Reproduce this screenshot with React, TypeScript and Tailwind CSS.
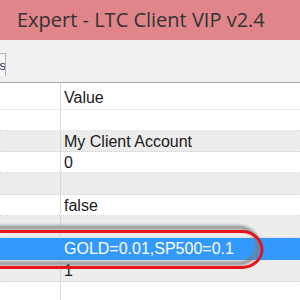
const rows: { value: string; selected?: boolean }[] = [
  { value: '' },
  { value: 'My Client Account' },
  { value: '0' },
  { value: '' },
  { value: 'false' },
  { value: '' },
  { value: 'GOLD=0.01,SP500=0.1', selected: true },
  { value: '1' },
];

const heights = ['h-[21px]', 'h-[21px]', 'h-[21px]', 'h-[22px]', 'h-[21px]', 'h-[22px]', 'h-[22px]', 'h-[22px]'];

export default function App() {
  return (
    <div className="relative w-[300px] h-[300px] overflow-hidden bg-white font-['Liberation_Sans',Arial,sans-serif]">
      <div className="h-[40px] bg-[#e0868a] flex items-center pl-[17px] text-[20px] text-[#333333] font-['Open_Sans',sans-serif] whitespace-nowrap">
        Expert - LTC Client VIP v2.4
      </div>
      <div className="h-[43px] bg-[#f0f0f0] border-b border-[#a8a8a8] pt-[13px]">
        <div className="w-[6px] h-[23px] bg-[#f7f7f7] border border-l-0 border-b-0 border-[#b4b4b4] overflow-hidden flex items-center justify-end">
          <span className="text-[13px] leading-none text-[#1e3a6e] -mr-[1px]">s</span>
        </div>
      </div>
      <div className="flex h-[27px] border-b border-[#ececec]">
        <div className="w-[61px] border-r border-[#d6d6d6]" />
        <div className="pl-[3px] pt-[7px] text-[16px] leading-none text-[#1a1a1a]">Value</div>
      </div>
      {rows.map((r, i) => (
        <div
          key={i}
          className={`flex ${heights[i]} border-b border-dotted ${
            r.selected ? 'bg-[#3399ff] border-[#3399ff]' : i % 2 === 1 ? 'bg-[#ececec] border-[#d4d4d4]' : 'bg-white border-[#d4d4d4]'
          }`}
        >
          <div className={`w-[61px] shrink-0 border-r ${r.selected ? 'border-[#3399ff]' : 'border-[#d6d6d6]'}`} />
          <div
            className={`pl-[3px] pt-[1px] flex items-center text-[16px] leading-none whitespace-nowrap ${
              r.selected ? 'text-white' : 'text-[#1a1a1a]'
            }`}
          >
            {r.value}
          </div>
        </div>
      ))}
      <div className="flex h-[40px]">
        <div className="w-[61px] border-r border-[#d6d6d6]" />
      </div>
      <svg className="absolute left-0 top-0 pointer-events-none" width="300" height="300">
        <defs>
          <filter id="blur" x="-20%" y="-50%" width="140%" height="200%">
            <feGaussianBlur stdDeviation="1.5" />
          </filter>
        </defs>
        <path
          d="M -30 227.5 H 238 A 20 18 0 0 1 238 263.5 H -30"
          fill="none"
          stroke="#7a7a7a"
          strokeOpacity="0.8"
          strokeWidth="4"
          filter="url(#blur)"
        />
        <path
          d="M -30 231.5 H 242 A 20 18 0 0 1 242 267.5 H -30"
          fill="none"
          stroke="#e8141c"
          strokeWidth="3"
        />
      </svg>
    </div>
  );
}
